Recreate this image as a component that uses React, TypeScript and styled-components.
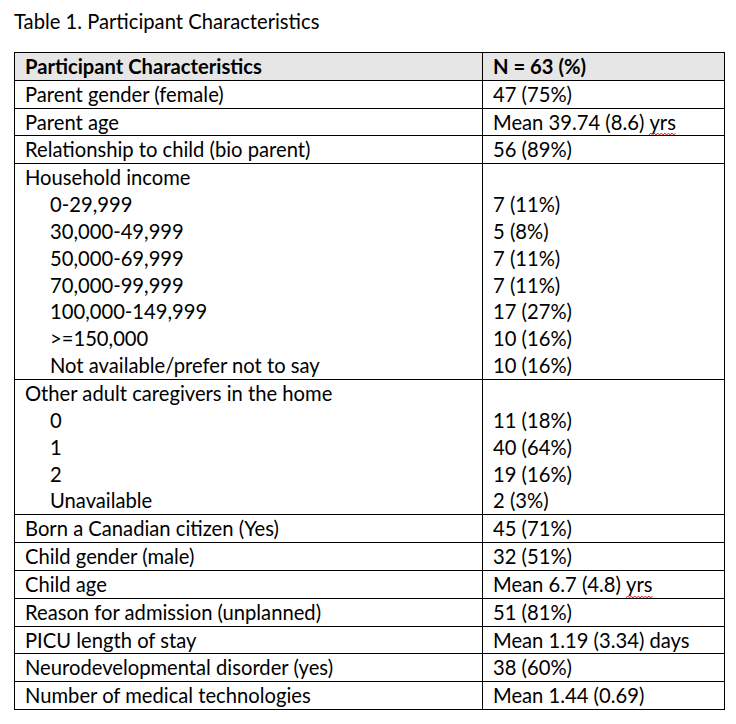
import React from "react";
import styled, { createGlobalStyle } from "styled-components";

const Global = createGlobalStyle`
  html, body { margin: 0; padding: 0; background: #fff; }
  body { font-family: Lato, "Open Sans", sans-serif; color: #000; }
`;

const Page = styled.div`
  padding: 8px 0 0 14px;
  width: 722px;
  box-sizing: border-box;
`;

const Title = styled.div`
  font-size: 20.2px;
  line-height: 26.85px;
  margin: 0 0 17px 0;
`;

const Table = styled.table`
  border-collapse: collapse;
  width: 710px;
  table-layout: fixed;
  font-size: 20.2px;
  line-height: 26.85px;
`;

const Row = styled.tr<{ $head?: boolean }>`
  background: ${(p) => (p.$head ? "#e7e6e6" : "transparent")};
  font-weight: ${(p) => (p.$head ? 700 : 400)};
`;

const Cell = styled.td`
  border: 1px solid #000;
  padding: 0 0 0 10px;
  vertical-align: top;
  white-space: nowrap;
`;

const Line = styled.div<{ $indent?: boolean }>`
  padding-left: ${(p) => (p.$indent ? "25px" : "0")};
  height: 26.85px;
`;

const Spell = styled.span`
  position: relative;
  display: inline-block;
`;

const Squiggle = styled.svg`
  position: absolute;
  left: 0;
  bottom: -1px;
  width: 100%;
  height: 4px;
  overflow: visible;
`;

const Misspelled = ({ children }: { children: string }) => {
  const pts: string[] = [];
  for (let x = 0; x <= 30; x += 2) pts.push(`${x},${(x / 2) % 2 === 0 ? 3 : 1}`);
  return (
    <Spell>
      {children}
      <Squiggle viewBox="0 0 30 4" preserveAspectRatio="none">
        <polyline points={pts.join(" ")} fill="none" stroke="#e01818" strokeWidth="1" />
      </Squiggle>
    </Spell>
  );
};

type Item = { label: string; value: React.ReactNode };
type Group = { label: string; items: Item[] };

const yrs = <Misspelled>yrs</Misspelled>;

const top: Item[] = [
  { label: "Parent gender (female)", value: "47 (75%)" },
  { label: "Parent age", value: <>Mean 39.74 (8.6) {yrs}</> },
  { label: "Relationship to child (bio parent)", value: "56 (89%)" },
];

const groups: Group[] = [
  {
    label: "Household income",
    items: [
      { label: "0-29,999", value: "7 (11%)" },
      { label: "30,000-49,999", value: "5 (8%)" },
      { label: "50,000-69,999", value: "7 (11%)" },
      { label: "70,000-99,999", value: "7 (11%)" },
      { label: "100,000-149,999", value: "17 (27%)" },
      { label: ">=150,000", value: "10 (16%)" },
      { label: "Not available/prefer not to say", value: "10 (16%)" },
    ],
  },
  {
    label: "Other adult caregivers in the home",
    items: [
      { label: "0", value: "11 (18%)" },
      { label: "1", value: "40 (64%)" },
      { label: "2", value: "19 (16%)" },
      { label: "Unavailable", value: "2 (3%)" },
    ],
  },
];

const bottom: Item[] = [
  { label: "Born a Canadian citizen (Yes)", value: "45 (71%)" },
  { label: "Child gender (male)", value: "32 (51%)" },
  { label: "Child age", value: <>Mean 6.7 (4.8) {yrs}</> },
  { label: "Reason for admission (unplanned)", value: "51 (81%)" },
  { label: "PICU length of stay", value: "Mean 1.19 (3.34) days" },
  { label: "Neurodevelopmental disorder (yes)", value: "38 (60%)" },
  { label: "Number of medical technologies", value: "Mean 1.44 (0.69)" },
];

const SimpleRow = ({ item }: { item: Item }) => (
  <Row>
    <Cell>
      <Line>{item.label}</Line>
    </Cell>
    <Cell>
      <Line>{item.value}</Line>
    </Cell>
  </Row>
);

const GroupRow = ({ group }: { group: Group }) => (
  <Row>
    <Cell>
      <Line>{group.label}</Line>
      {group.items.map((it, i) => (
        <Line key={i} $indent>
          {it.label}
        </Line>
      ))}
    </Cell>
    <Cell>
      <Line />
      {group.items.map((it, i) => (
        <Line key={i}>{it.value}</Line>
      ))}
    </Cell>
  </Row>
);

export default function App() {
  return (
    <>
      <Global />
      <Page>
        <Title>Table 1. Participant Characteristics</Title>
        <Table>
          <colgroup>
            <col style={{ width: 468 }} />
            <col style={{ width: 242 }} />
          </colgroup>
          <tbody>
            <Row $head>
              <Cell>
                <Line>Participant Characteristics</Line>
              </Cell>
              <Cell>
                <Line>N = 63 (%)</Line>
              </Cell>
            </Row>
            {top.map((it, i) => (
              <SimpleRow key={i} item={it} />
            ))}
            {groups.map((g, i) => (
              <GroupRow key={i} group={g} />
            ))}
            {bottom.map((it, i) => (
              <SimpleRow key={i} item={it} />
            ))}
          </tbody>
        </Table>
      </Page>
    </>
  );
}
